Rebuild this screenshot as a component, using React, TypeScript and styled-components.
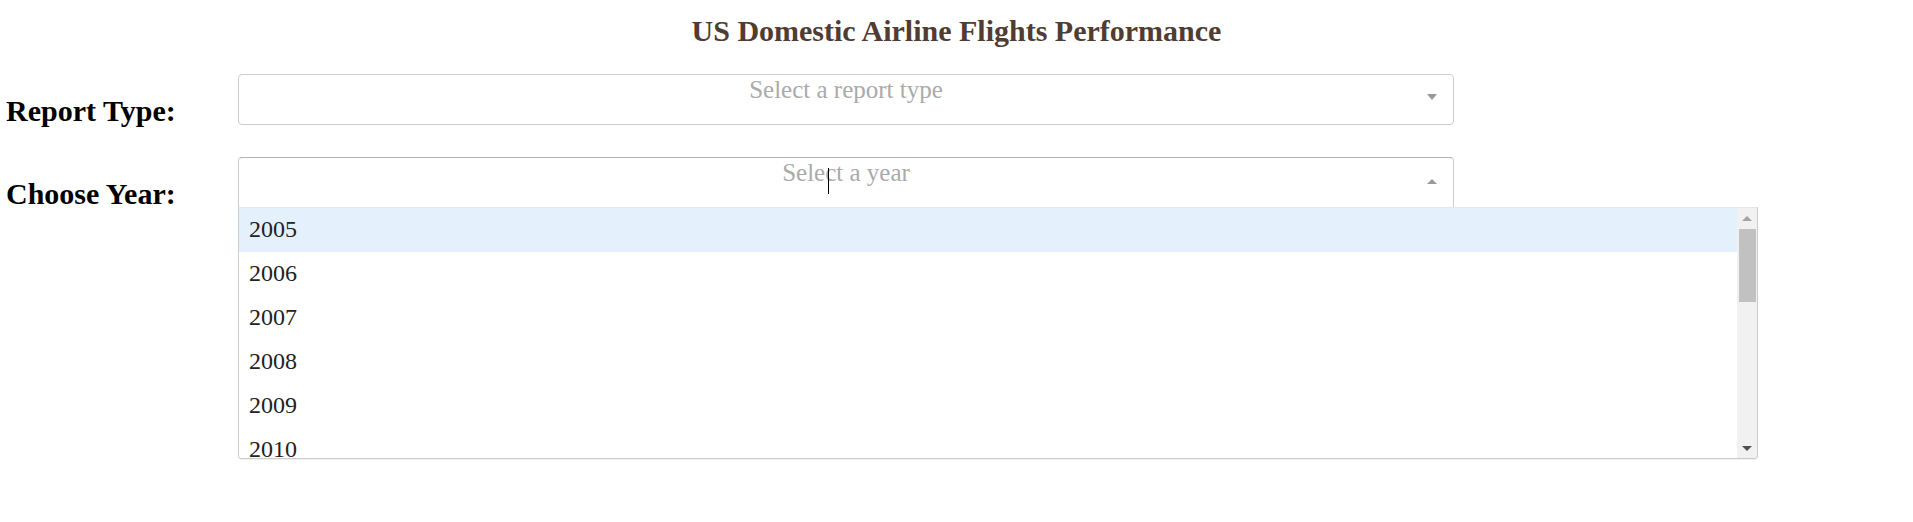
import React from "react";
import styled, { createGlobalStyle } from "styled-components";

const GlobalStyle = createGlobalStyle`
  html, body {
    margin: 0;
    padding: 0;
    background: #ffffff;
  }
  body {
    font-family: "Liberation Serif", "Times New Roman", serif;
  }
`;

const Page = styled.div`
  box-sizing: border-box;
  min-height: 522px;
  padding-top: 14px;
`;

const Title = styled.h1`
  margin: 0;
  text-align: center;
  font-size: 30px;
  line-height: 34px;
  font-weight: 700;
  color: #503c32;
`;

const Form = styled.div`
  display: flex;
  flex-direction: column;
  gap: 32px;
  margin-top: 26px;
  padding-left: 6px;
`;

const Row = styled.div`
  display: flex;
  align-items: flex-start;
  height: 51px;
`;

const Label = styled.label`
  flex: none;
  width: 232px;
  padding-top: 22px;
  font-size: 30px;
  line-height: 30px;
  font-weight: 700;
  color: #000000;
`;

const Field = styled.div`
  position: relative;
  flex: none;
  width: 1520px;
  z-index: 1;
`;

const Control = styled.div<{ $open?: boolean }>`
  position: relative;
  box-sizing: border-box;
  width: 80%;
  height: 51px;
  border: 1px solid;
  border-color: ${(p) => (p.$open ? "#b3b3b3 #ccc #d9d9d9" : "#ccc")};
  border-radius: ${(p) => (p.$open ? "4px 4px 0 0" : "4px")};
  background: #ffffff;
  display: grid;
  grid-template-areas: "stack";
`;

const Placeholder = styled.div`
  grid-area: stack;
  padding: 0 10px;
  text-align: center;
  font-size: 25px;
  line-height: 30px;
  color: #aaaaaa;
`;

const ArrowZone = styled.div<{ $offset: number }>`
  grid-area: stack;
  justify-self: end;
  align-self: start;
  margin-right: 16px;
  padding-top: ${(p) => p.$offset}px;
`;

const Arrow = styled.span<{ $up?: boolean }>`
  display: block;
  width: 0;
  height: 0;
  border-style: solid;
  border-width: ${(p) => (p.$up ? "0 5.5px 5px" : "6px 5.5px 0")};
  border-color: ${(p) =>
    p.$up ? "transparent transparent #999" : "#999 transparent transparent"};
`;

const Caret = styled.span`
  position: absolute;
  left: 589px;
  top: 10px;
  width: 1px;
  height: 26px;
  background: #000000;
`;

const Menu = styled.div`
  position: absolute;
  top: 50px;
  left: 0;
  right: 0;
  box-sizing: border-box;
  height: 252px;
  display: flex;
  background: #ffffff;
  border: 1px solid #cccccc;
  border-top-color: #e6e6e6;
  border-radius: 0 0 4px 4px;
  box-shadow: 0 1px 0 rgba(0, 0, 0, 0.06);
  overflow: hidden;
`;

const OptionList = styled.div`
  flex: 1;
  overflow: hidden;
`;

const Option = styled.div<{ $focused?: boolean }>`
  padding: 7px 10px 9px;
  font-size: 24px;
  line-height: 28px;
  color: #222222;
  background: ${(p) => (p.$focused ? "#e4f1fd" : "#ffffff")};
`;

const Scrollbar = styled.div`
  flex: none;
  width: 20px;
  display: flex;
  flex-direction: column;
  background: #f1f1f1;
`;

const ScrollButton = styled.div`
  flex: none;
  height: 20px;
  display: flex;
  align-items: center;
  justify-content: center;
`;

const ScrollArrow = styled.span<{ $up?: boolean; $color: string }>`
  display: block;
  width: 0;
  height: 0;
  border-style: solid;
  border-width: ${(p) => (p.$up ? "0 5px 5px" : "5px 5px 0")};
  border-color: ${(p) =>
    p.$up
      ? `transparent transparent ${p.$color}`
      : `${p.$color} transparent transparent`};
`;

const Thumb = styled.div`
  flex: none;
  height: 73px;
  margin: 1px 1px 0 2px;
  background: #c1c1c1;
`;

const Track = styled.div`
  flex: 1;
`;

const years = [2005, 2006, 2007, 2008, 2009, 2010];

export default function App() {
  return (
    <Page>
      <GlobalStyle />
      <Title>US Domestic Airline Flights Performance</Title>
      <Form>
        <Row>
          <Label>Report Type:</Label>
          <Field>
            <Control>
              <Placeholder>Select a report type</Placeholder>
              <ArrowZone $offset={19}>
                <Arrow />
              </ArrowZone>
            </Control>
          </Field>
        </Row>
        <Row>
          <Label>Choose Year:</Label>
          <Field>
            <Control $open>
              <Placeholder>Select a year</Placeholder>
              <ArrowZone $offset={21}>
                <Arrow $up />
              </ArrowZone>
              <Caret />
            </Control>
            <Menu>
              <OptionList>
                {years.map((y, i) => (
                  <Option key={y} $focused={i === 0}>
                    {y}
                  </Option>
                ))}
              </OptionList>
              <Scrollbar>
                <ScrollButton>
                  <ScrollArrow $up $color="#a3a3a3" />
                </ScrollButton>
                <Thumb />
                <Track />
                <ScrollButton>
                  <ScrollArrow $color="#505050" />
                </ScrollButton>
              </Scrollbar>
            </Menu>
          </Field>
        </Row>
      </Form>
    </Page>
  );
}
